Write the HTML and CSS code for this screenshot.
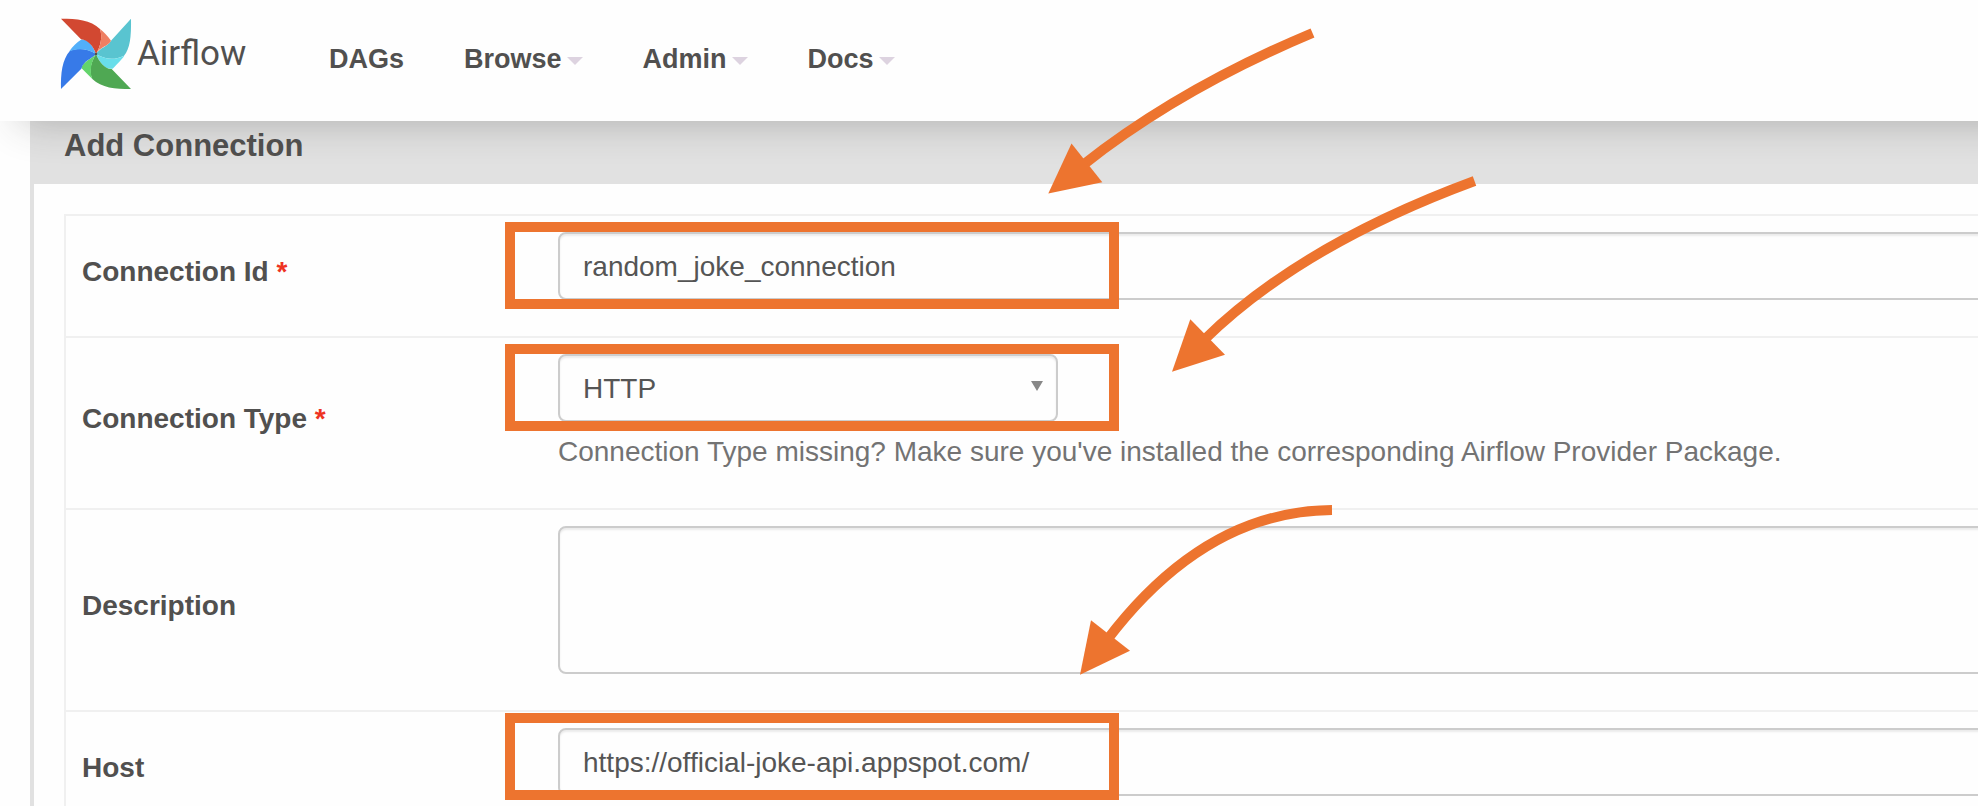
FILE: index.html
```html
<!DOCTYPE html>
<html lang="en">
<head>
<meta charset="utf-8">
<title>Add Connection - Airflow</title>
<link rel="stylesheet" href="styles.css">
</head>
<body>
<div class="page">
  <header class="navbar">
    <a class="brand" href="#">
      <svg class="brand-mark" viewBox="60 53 216 216" aria-hidden="true">
        <path fill="#59c4d0" d="M273 55 L213 121 C205 138 178 142 168 161 C195 178 225 180 252 166 C270 145 274 110 273 55Z"/>
        <path fill="#68deea" d="M168 161 C195 178 225 180 253 166 C248 175 232 190 218 205 C195 209 180 188 168 161Z"/>
        <path fill="#4fa853" d="M273 266 C225 266 185 263 157 236 C145 210 155 182 168 161 C178 185 195 207 215 206Z"/>
        <path fill="#63d46b" d="M168 161 C155 182 147 210 157 236 L124 203 C128 185 152 178 168 161Z"/>
        <path fill="#377ae8" d="M63 266 C62 220 66 178 90 151 C115 142 145 145 168 161 C152 178 132 180 124 205Z"/>
        <path fill="#52affa" d="M168 161 C145 145 115 143 88 153 C98 138 110 126 123 118 C145 114 160 140 168 161Z"/>
        <path fill="#d24831" d="M63 55 C110 55 152 58 180 86 C188 110 182 138 168 161 C160 138 145 119 123 117Z"/>
        <path fill="#ee7f62" d="M180 86 C190 94 205 108 213 121 C207 137 177 140 168 161 C182 138 188 110 180 86Z"/>
        <circle cx="168" cy="161" r="4" fill="#51504f"/>
      </svg>
      <span class="brand-name">Airflow</span>
    </a>
    <nav class="menu">
      <a class="menu-item" href="#">DAGs</a>
      <a class="menu-item" href="#">Browse<span class="caret"></span></a>
      <a class="menu-item" href="#">Admin<span class="caret"></span></a>
      <a class="menu-item" href="#">Docs<span class="caret"></span></a>
    </nav>
  </header>

  <main class="panel">
    <h1 class="panel-title">Add Connection</h1>
    <form class="form">
      <div class="row">
        <label class="label" for="conn-id">Connection Id <span class="required">*</span></label>
        <div class="field"><input class="control" id="conn-id" type="text" value="random_joke_connection"></div>
      </div>
      <div class="row">
        <label class="label" for="conn-type">Connection Type <span class="required">*</span></label>
        <div class="field">
          <div class="select-box">
            <select class="control" id="conn-type"><option>HTTP</option></select>
            <span class="select-arrow"></span>
          </div>
          <p class="help">Connection Type missing? Make sure you've installed the corresponding Airflow Provider Package.</p>
        </div>
      </div>
      <div class="row">
        <label class="label" for="description">Description</label>
        <div class="field"><textarea class="control control-area" id="description"></textarea></div>
      </div>
      <div class="row">
        <label class="label" for="host">Host</label>
        <div class="field"><input class="control" id="host" type="text" value="https://official-joke-api.appspot.com/"></div>
      </div>
    </form>
  </main>

  <svg class="annotations" width="1978" height="806" viewBox="0 0 1978 806" aria-hidden="true">
    <g class="stroke">
      <rect x="510" y="227" width="604" height="77"/>
      <rect x="510" y="349" width="604" height="77"/>
      <rect x="510" y="718" width="604" height="77"/>
      <path d="M1312.5 33 Q1179 89 1083 165"/>
      <path d="M1474.5 181 Q1301 245 1204 340"/>
      <path d="M1332 510 Q1205 511 1107 640"/>
    </g>
    <g class="heads">
      <path d="M1048.3 193.6 L1071.5 143.5 L1102.3 182.3Z"/>
      <path d="M1172 371.7 L1190.3 319.3 L1225 354.7Z"/>
      <path d="M1080 674.7 L1091 620.3 L1130 650.7Z"/>
    </g>
  </svg>
</div>
</body>
</html>
```
FILE: styles.css
```css
* { box-sizing: border-box; }

body {
  margin: 0;
  background: #fefefe;
  color: #51504f;
  font-family: "Liberation Sans", Arial, sans-serif;
  font-size: 28px;
  line-height: 40px;
}

.page {
  position: relative;
  height: 100vh;
  overflow: hidden;
}

.navbar {
  position: relative;
  z-index: 1;
  display: flex;
  align-items: flex-start;
  height: 121px;
  margin-right: -60px;
  padding-left: 60px;
  background: #fefefe;
  box-shadow: 0 20px 40px -20px rgba(51, 50, 46, 0.3);
}

.brand {
  display: flex;
  width: 239px;
  padding-top: 18px;
  gap: 5px;
  color: inherit;
  text-decoration: none;
}

.brand-mark {
  width: 72px;
  height: 72px;
}

.brand-name {
  padding-top: 16px;
  font-family: Roboto, sans-serif;
  font-size: 35px;
}

.menu {
  display: flex;
  padding-top: 39px;
}

.menu-item {
  display: flex;
  align-items: center;
  gap: 5px;
  padding: 0 30px;
  color: inherit;
  font-size: 27px;
  font-weight: 700;
  text-decoration: none;
}

.caret {
  margin-top: 4px;
  border: 8px solid transparent;
  border-top-color: #ddd3e0;
  border-bottom: 0;
}

.panel {
  margin: -17px -60px 0 30px;
  border-left: 4px solid #e1e1e1;
}

.panel-title {
  margin: 0;
  padding: 22px 30px 18px;
  background: #e1e1e1;
  font-size: 31px;
}

.form {
  margin: 30px;
  border: 2px solid #f0f0f0;
}

.row {
  display: grid;
  grid-template-columns: 476px 1fr;
  align-items: center;
  border-bottom: 2px solid #f0f0f0;
}

.label {
  padding: 0 16px 8px;
  font-weight: 700;
}

.required { color: #ee3322; }

.field { padding: 16px 16px 36px; }

.control {
  display: block;
  width: 100%;
  height: 68px;
  margin: 0;
  padding: 2px 23px 0;
  border: 2px solid #ccc;
  border-radius: 8px;
  background: #fefefe;
  box-shadow: inset 0 2px 2px rgba(0, 0, 0, 0.08);
  color: #555;
  font: inherit;
  appearance: none;
}

.control-area {
  height: 148px;
  resize: none;
}

.select-box {
  position: relative;
  width: 500px;
}

.select-arrow {
  position: absolute;
  top: 27px;
  right: 15px;
  border: 6px solid transparent;
  border-top: 10px solid #888;
  border-bottom: 0;
}

.help {
  margin: 0;
  padding-top: 10px;
  color: #737373;
}

.annotations {
  position: absolute;
  z-index: 2;
  top: 0;
  left: 0;
  pointer-events: none;
}

.stroke {
  fill: none;
  stroke: #ed742f;
  stroke-width: 10;
}

.heads { fill: #ed742f; }
```
